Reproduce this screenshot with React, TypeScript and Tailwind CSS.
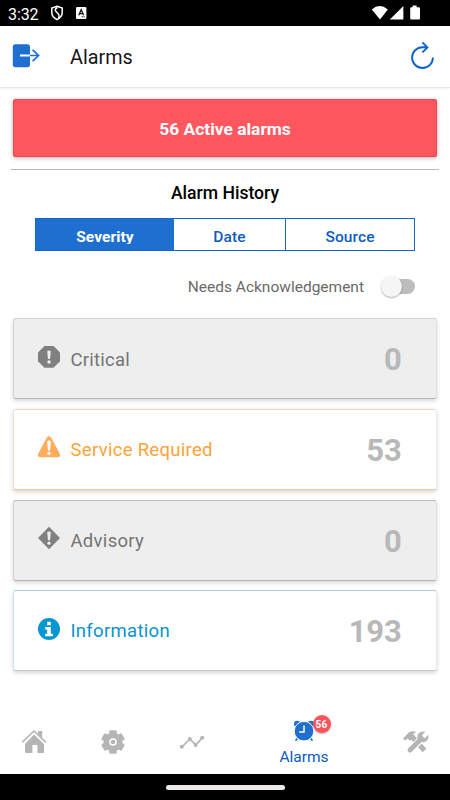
import type { ReactNode } from "react";
import clsx from "clsx";

const CriticalIcon = () => (
  <svg width="24" height="24" viewBox="0 0 24 24">
    <path d="M7.4 1h9.2L23 7.4v8.8l-6.4 6.6H7.4L1 16.2V7.4z" fill="#808080" />
    <path d="M10.2 6.2q1.8-1.2 3.6 0L13 14h-2z" fill="#eee" />
    <circle cx="12" cy="17" r="1.7" fill="#eee" />
  </svg>
);

const ServiceIcon = () => (
  <svg width="24" height="24" viewBox="0 0 24 24">
    <path d="M9.8 2.6Q12-.2 14.2 2.6l8.6 16.2q1.2 3-1.6 3.4H2.8q-2.8-.4-1.6-3.4z" fill="#ffad5c" />
    <path d="M10.1 6.2q1.9-1.2 3.8 0L13 15.4h-2z" fill="#fff" />
    <circle cx="12" cy="18.4" r="1.7" fill="#fff" />
  </svg>
);

const AdvisoryIcon = () => (
  <svg width="24" height="24" viewBox="0 0 24 24">
    <path d="M12 .8 23 12 12 23.2 1 12z" fill="#808080" />
    <path d="M10.2 6q1.8-1.2 3.6 0L13 14.2h-2z" fill="#eee" />
    <circle cx="12" cy="17.2" r="1.6" fill="#eee" />
  </svg>
);

const InformationIcon = () => (
  <svg width="24" height="24" viewBox="0 0 24 24">
    <circle cx="12" cy="12" r="11" fill="#0696d2" />
    <path d="M10.2 4.8h3.6v3.4h-3.6zM8.2 10h5.6v6.8h2v2.4H8.2v-2.4h2v-4.4h-2z" fill="#fff" />
  </svg>
);

const severities: {
  label: string;
  count: number;
  icon: ReactNode;
  text: string;
  box: string;
}[] = [
  {
    label: "Critical",
    count: 0,
    icon: <CriticalIcon />,
    text: "text-[#747474] tracking-[0.25px]",
    box: "bg-[#eee] border-l-[#d2d2d2] border-r-[#e2e2e2] border-t-[#d2d2d2] border-b-[#b8b8b8]",
  },
  {
    label: "Service Required",
    count: 53,
    icon: <ServiceIcon />,
    text: "text-[#ffa238] tracking-[0.3px]",
    box: "bg-white border-l-[#f6dccb] border-r-[#eee] border-t-[#fbd0b8] border-b-[#f9c49a]",
  },
  {
    label: "Advisory",
    count: 0,
    icon: <AdvisoryIcon />,
    text: "text-[#747474] tracking-[0.3px]",
    box: "bg-[#eee] border-l-[#d2d2d2] border-r-[#e2e2e2] border-t-[#bcbcbc] border-b-[#b4b4b4]",
  },
  {
    label: "Information",
    count: 193,
    icon: <InformationIcon />,
    text: "text-[#0993cf] tracking-[0.3px]",
    box: "bg-white border-l-[#c8e2ee] border-r-[#e4eaee] border-t-[#a5d1e6] border-b-[#c6c8ca]",
  },
];

function StatusBar() {
  return (
    <div className="flex h-[26px] shrink-0 items-center bg-black pl-2 pr-[30px] text-white">
      <span className="w-[42px] pt-[3px] text-[16px] leading-[24px] tracking-[-0.1px]">3:32</span>
      <svg width="14" height="16" viewBox="0 0 14 16" fill="none" stroke="#fff" strokeWidth="1.5">
        <path d="M7 1.2 12.2 3v4.6c0 3.2-2.2 5.6-5.2 7-3-1.4-5.2-3.8-5.2-7V3z" />
        <path d="M7.4 2.5C4.8 4 4.6 5.4 6.6 7.2S9.8 10 8.6 13.4" />
      </svg>
      <svg className="ml-3" width="11" height="12" viewBox="0 0 11 12">
        <rect width="10.4" height="12" rx="1.2" fill="#fff" />
        <path d="M2.8 8.2 5.2 2.6l2.4 5.6M3.8 6.6h2.8" fill="none" stroke="#111" strokeWidth="1.3" />
        <path d="M5.6 9.8h1.2M7.6 9.8h1.2" stroke="#111" strokeWidth="1" />
      </svg>
      <svg className="ml-auto" width="49" height="16" viewBox="0 0 49 16" fill="#fff">
        <path d="M.8 4.4Q8.6-2.2 16.8 4.4L9 14.6z" />
        <path d="M32.4 1v13.6H18.8z" />
        <path d="M41.6.6h4v1.6H48q1 0 1 1v10.4q0 1-1 1h-7.8q-1 0-1-1V3.2q0-1 1-1h1.4z" />
      </svg>
    </div>
  );
}

function Header() {
  return (
    <header className="flex h-[62px] shrink-0 items-center border-b border-[#e9e9e9] bg-white pl-3 pr-[15px] shadow-[0_1px_2px_rgba(0,0,0,0.05)]">
      <svg className="-mt-px" width="28" height="26" viewBox="0 0 28 26" fill="none">
        <rect x=".8" y="1.2" width="17.2" height="23" rx="2.6" fill="#1f6fd0" />
        <path d="M8 12.5h10" stroke="#fff" strokeWidth="2" />
        <path d="M18 12.5h8.6M20.6 6.8l6 5.7-6 5.7" stroke="#1f6fd0" strokeWidth="1.7" />
      </svg>
      <h1 className="ml-[30px] pt-[3px] text-[19.8px] leading-6 text-[#161616]">Alarms</h1>
      <svg className="-mt-px ml-auto" width="25" height="30" viewBox="0 0 25 30" fill="none" stroke="#0a63ce" strokeWidth="1.9">
        <path d="M22.9 16.4A10.4 10.4 0 1 1 12.5 6.2H17" />
        <path d="m12.4 1.4 5 5-5 5" />
      </svg>
    </header>
  );
}

function SeverityCard({ label, count, icon, text, box }: (typeof severities)[number]) {
  return (
    <div
      className={clsx(
        "flex h-[81px] items-center rounded-[3px] border pl-[22.5px] pr-[34.5px] shadow-[0_2px_4px_rgba(0,0,0,0.16)]",
        box
      )}
    >
      <span className="-mt-[4px]">{icon}</span>
      <span className={clsx("ml-[10px] pt-[3px] text-[18.5px]", text)}>{label}</span>
      <span className="ml-auto pt-[3px] text-[31px] font-bold leading-9 tracking-[-0.2px] text-[#b8b8b8]">{count}</span>
    </div>
  );
}

function BottomNav() {
  return (
    <nav className="flex h-[74px] shrink-0 items-center bg-white pl-[21px] pt-[10px]">
      {/* Home */}
      <svg width="26" height="26" viewBox="0 0 26 26" fill="#b5b5b5">
        <path d="M13 5.6 23 15v8q0 1-1 1h-5.6v-8h-5v8H5q-1 0-1-1v-8z" />
        <path d="M1.6 13.4 13 2.4l11.4 11" fill="none" stroke="#fff" strokeWidth="4" />
        <path d="M17 2h4.2v7L17 5z" />
        <path d="M1.6 12.8 13 2l11.4 10.8" fill="none" stroke="#b5b5b5" strokeWidth="1.6" strokeLinecap="round" />
      </svg>
      {/* Settings */}
      <svg className="ml-[54px]" width="24" height="24" viewBox="0 0 24 24">
        <g fill="#b5b5b5">
          <circle cx="12" cy="12" r="9.5" />
          <rect x="8.3" y=".3" width="7.4" height="23.4" rx="1.2" />
          <rect x="8.3" y=".3" width="7.4" height="23.4" rx="1.2" transform="rotate(60 12 12)" />
          <rect x="8.3" y=".3" width="7.4" height="23.4" rx="1.2" transform="rotate(120 12 12)" />
        </g>
        <circle cx="12" cy="12" r="3.1" fill="none" stroke="#fff" strokeWidth="1.5" />
      </svg>
      {/* Trends */}
      <svg className="ml-[54px]" width="26" height="16" viewBox="0 0 26 16" fill="#b5b5b5">
        <path d="m3 13 7.8-8 6 6 6.6-7.4" fill="none" stroke="#b5b5b5" strokeWidth="1.7" />
        <circle cx="2.8" cy="12.8" r="2" />
        <circle cx="10.8" cy="5" r="2" />
        <circle cx="16.6" cy="11" r="2" />
        <circle cx="23.2" cy="3.8" r="2" />
      </svg>
      {/* Alarms */}
      <div className="relative ml-[73px] flex w-[52px] flex-col items-center pt-[3px]">
        <svg width="22" height="22" viewBox="0 0 22 22">
          <circle cx="4.2" cy="4" r="3.2" fill="#1f6fd0" />
          <circle cx="17.8" cy="4" r="3.2" fill="#1f6fd0" />
          <path d="m5.5 17-3 3.8M16.5 17l3 3.8" stroke="#1f6fd0" strokeWidth="1.7" />
          <circle cx="11" cy="11.2" r="9.8" fill="#1f6fd0" stroke="#fff" />
          <path d="M11 5.5v6.400H6.200" fill="none" stroke="#fff" strokeWidth="1.5" />
        </svg>
        <span className="absolute -top-[2px] left-[34.5px] flex size-[18px] items-center justify-center rounded-full bg-[#ff525b] pt-px text-[10px] font-bold leading-3 tracking-[0.2px] text-white shadow-[0_1px_2px_rgba(0,0,0,0.3)]">
          56
        </span>
        <span className="mt-[5px] text-[15.5px] leading-5 text-[#0b58c4]">Alarms</span>
      </div>
      {/* Tools */}
      <svg className="ml-[72px]" width="27" height="24" viewBox="0 0 27 24">
        <path d="m9 5.5 13.5 15" stroke="#b5b5b5" strokeWidth="5" />
        <path d="M1 8.6 6.8 2.4Q10 .2 14.2 2L11 4l1 3-4 4-2.6-2.4-2 2z" fill="#b5b5b5" />
        <path d="M8 20.5 20 8.4" stroke="#fff" strokeWidth="7" />
        <path d="M8 20 19.5 8.6" stroke="#b5b5b5" strokeWidth="4.8" strokeLinecap="round" />
        <path d="M23.4 1.8 20.2 5l.6 2.4 2.4.6 3.2-3.2q.6 4.4-2.2 6.4-2.6 1.6-5 .6l-3.8-3.6q-.8-3 1.4-5.2Q19.6.8 23.4 1.8z" fill="#b5b5b5" />
      </svg>
    </nav>
  );
}

export default function App() {
  return (
    <div className="flex h-[800px] w-[450px] flex-col overflow-hidden bg-white font-[Roboto,sans-serif]">
      <StatusBar />
      <Header />

      <main className="flex flex-1 flex-col px-[13px] pt-[11px]">
        <button className="h-[58px] shrink-0 rounded-[2px] border border-[#f8444f] bg-[#ff575f] pt-[2px] text-[17.4px] font-bold text-white shadow-[0_1px_4px_rgba(0,0,0,0.3)]">
          56 Active alarms
        </button>

        <hr className="-mx-[2px] mt-3 border-[#b8b8b8]" />

        <h2 className="mt-[11px] text-center text-[17.6px] font-medium leading-6 text-black">Alarm History</h2>

        <div className="mx-[22px] mt-[13px] flex h-[33px] shrink-0 border border-[#1266cd] text-[15.5px] font-medium leading-[36px] tracking-[0.1px] text-[#0d5cc8]">
          <button className="flex w-[138px] items-start justify-center bg-[#1f6fd0] font-bold text-white">
            <span className="block h-[25px] overflow-hidden leading-[36px]">Severity</span>
          </button>
          <button className="w-[112px] border-r border-[#1266cd]">Date</button>
          <button className="flex-1">Source</button>
        </div>

        <div className="mt-[23px] flex h-[25px] shrink-0 items-center justify-end pr-[22px]">
          <span className="pt-[2px] text-[15.5px] text-[#6a6a6a]">Needs Acknowledgement</span>
          <button role="switch" aria-checked="false" className="ml-[17px] flex h-[15px] w-[34px] items-center rounded-full">
            <span className="relative z-10 size-[21px] shrink-0 rounded-full bg-[#f5f5f5] shadow-[0_1px_2px_rgba(0,0,0,0.3)]" />
            <span className="-ml-[12px] h-[15px] flex-1 rounded-full bg-[#bdbdbd]" />
          </button>
        </div>

        <section className="mt-[19.4px] flex flex-col gap-[9.6px]">
          {severities.map((item) => (
            <SeverityCard key={item.label} {...item} />
          ))}
        </section>
      </main>

      <BottomNav />

      <div className="flex h-[26px] shrink-0 justify-center bg-black pt-[10.5px]">
        <div className="h-[5px] w-[119px] rounded-full bg-[#ece8ec]" />
      </div>
    </div>
  );
}
